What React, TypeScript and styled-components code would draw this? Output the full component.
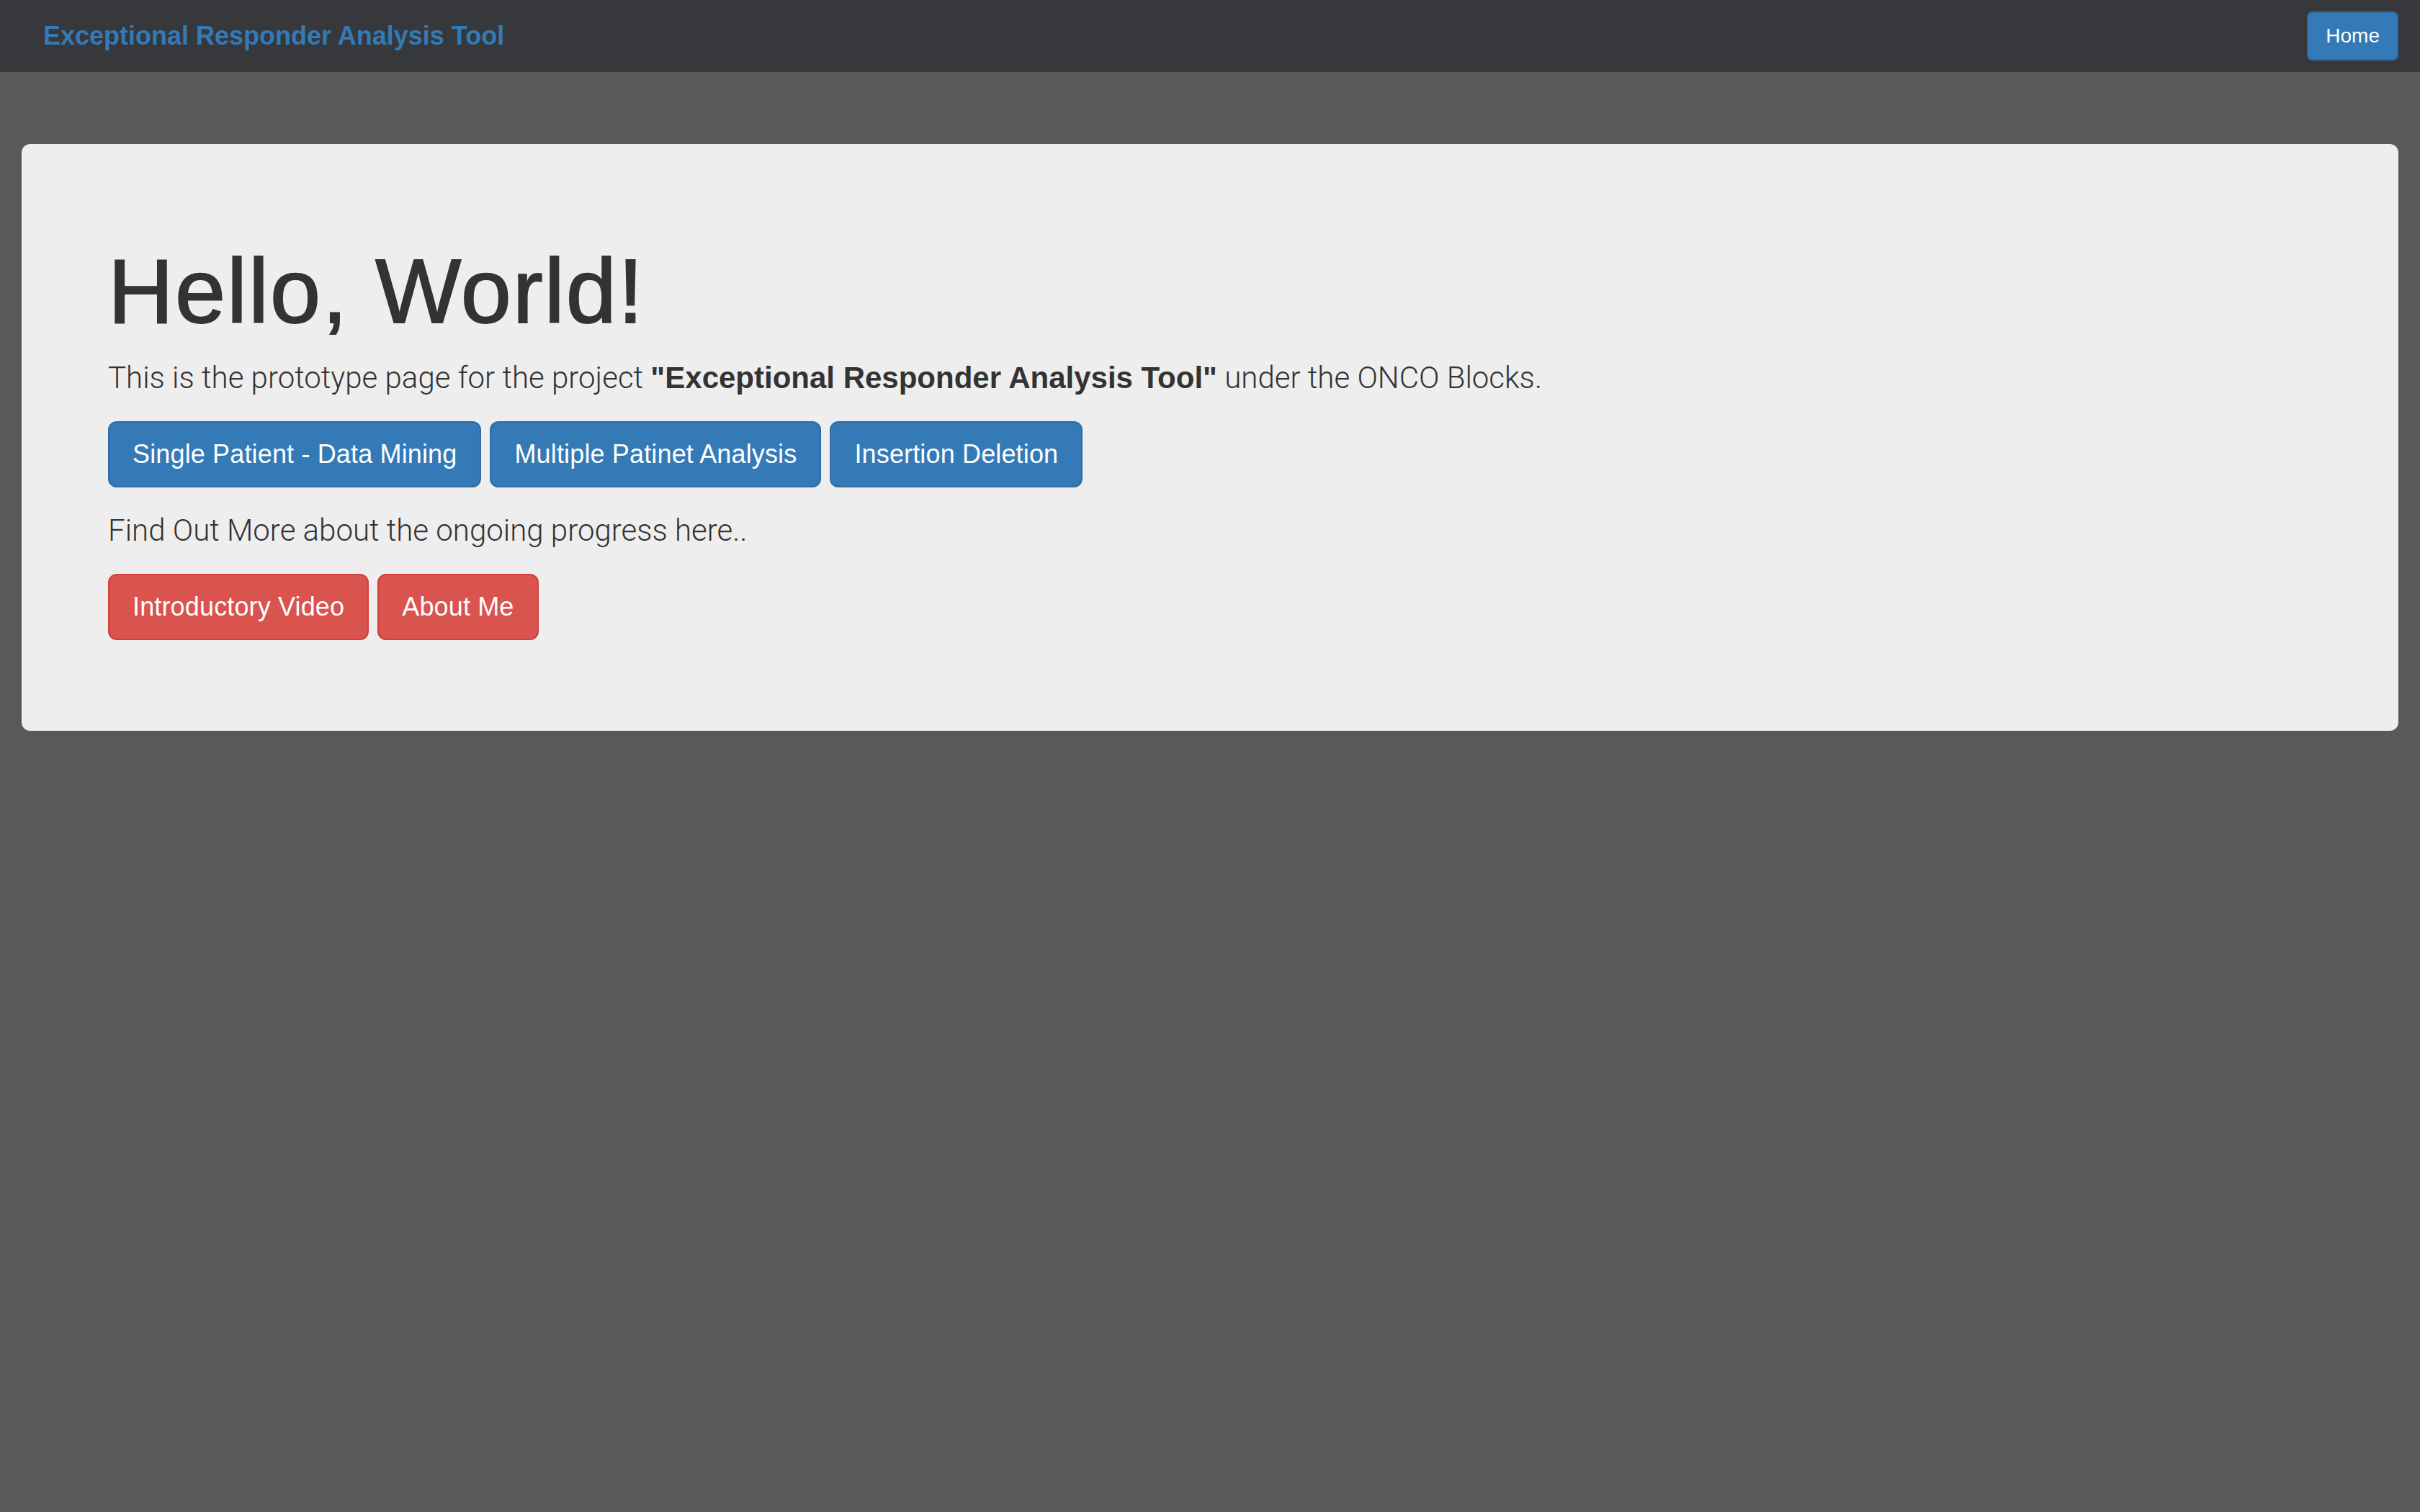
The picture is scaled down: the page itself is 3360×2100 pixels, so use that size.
import React from "react";
import styled, { createGlobalStyle } from "styled-components";

const GlobalStyle = createGlobalStyle`
  html, body {
    margin: 0;
    padding: 0;
  }
  body {
    background: #595959;
    font-family: "Liberation Sans", Arial, Helvetica, sans-serif;
    color: #333333;
    min-height: 2100px;
  }
  * { box-sizing: border-box; }
`;

const Page = styled.div`
  min-height: 2100px;
  display: flex;
  flex-direction: column;
`;

const Navbar = styled.nav`
  height: 100px;
  background: #37383c;
  display: flex;
  align-items: flex-start;
  justify-content: space-between;
  padding: 0 30px;
`;

const Brand = styled.a`
  display: block;
  padding: 0 30px;
  height: 100px;
  line-height: 100px;
  font-size: 36px;
  font-weight: 700;
  color: #337ab7;
  text-decoration: none;
`;

const NavButton = styled.button`
  margin-top: 16px;
  height: 68px;
  padding: 0 24px;
  font-family: inherit;
  font-size: 28px;
  line-height: 40px;
  color: #ffffff;
  background: #337ab7;
  border: 2px solid #2e6da4;
  border-radius: 8px;
`;

const Container = styled.main`
  padding: 100px 30px 0;
`;

const Jumbotron = styled.section`
  background: #eeeeee;
  border-radius: 12px;
  padding: 96px 120px;
`;

const Heading = styled.h1`
  margin: 40px 0 20px;
  font-size: 126px;
  line-height: 1.1;
  font-weight: 400;
  letter-spacing: 2px;
  -webkit-text-stroke: 2px #333333;
  color: #333333;
`;

const Lead = styled.p`
  margin: 0 0 30px;
  font-family: Roboto, "Liberation Sans", Arial, sans-serif;
  font-size: 42px;
  line-height: 60px;
  font-weight: 300;
  color: #333333;
`;

const Strong = styled.b`
  font-family: "Liberation Sans", Arial, sans-serif;
  font-weight: 700;
`;

const ButtonRow = styled.div`
  display: flex;
  gap: 12px;
  margin: 0 0 30px;
`;

const BigButton = styled.button<{ $variant: "primary" | "danger" }>`
  height: 92px;
  padding: 0 32px;
  font-family: inherit;
  font-size: 36px;
  line-height: 48px;
  font-weight: 400;
  letter-spacing: 0.15px;
  color: #ffffff;
  border-radius: 12px;
  border: 2px solid ${(p) => (p.$variant === "primary" ? "#2e6da4" : "#d43f3a")};
  background: ${(p) => (p.$variant === "primary" ? "#337ab7" : "#d9534f")};
  white-space: nowrap;
`;

export default function App() {
  return (
    <Page>
      <GlobalStyle />
      <Navbar>
        <Brand href="#">Exceptional Responder Analysis Tool</Brand>
        <NavButton>Home</NavButton>
      </Navbar>
      <Container>
        <Jumbotron>
          <Heading>Hello, World!</Heading>
          <Lead>
            This is the prototype page for the project{" "}
            <Strong>"Exceptional Responder Analysis Tool"</Strong> under the ONCO Blocks.
          </Lead>
          <ButtonRow>
            <BigButton $variant="primary">Single Patient - Data Mining</BigButton>
            <BigButton $variant="primary">Multiple Patinet Analysis</BigButton>
            <BigButton $variant="primary">Insertion Deletion</BigButton>
          </ButtonRow>
          <Lead>Find Out More about the ongoing progress here..</Lead>
          <ButtonRow>
            <BigButton $variant="danger">Introductory Video</BigButton>
            <BigButton $variant="danger">About Me</BigButton>
          </ButtonRow>
        </Jumbotron>
      </Container>
    </Page>
  );
}
